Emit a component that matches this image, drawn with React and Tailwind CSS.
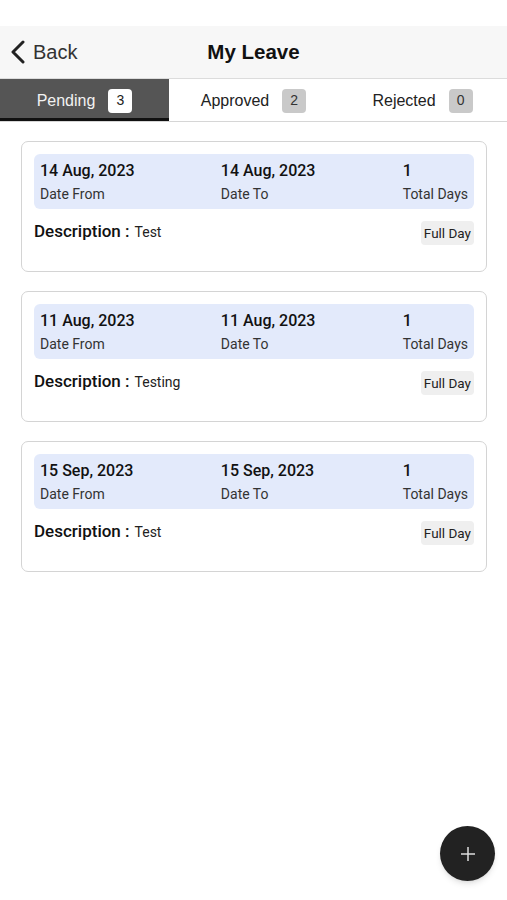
import React from "react";

const leaves = [
  { from: "14 Aug, 2023", to: "14 Aug, 2023", days: "1", desc: "Test" },
  { from: "11 Aug, 2023", to: "11 Aug, 2023", days: "1", desc: "Testing" },
  { from: "15 Sep, 2023", to: "15 Sep, 2023", days: "1", desc: "Test" },
];

function Card({ l }) {
  return (
    <div className="h-[131px] rounded-[7px] border border-[#d4d4d4] bg-white px-[12px] pt-[12px]">
      <div className="flex h-[55px] rounded-[6px] bg-[#e3eafb] px-[6px] pt-[7px] text-[#111]">
        <div className="w-[182px] whitespace-nowrap">
          <div className="text-[16px] font-medium leading-[20px]">{l.from}</div>
          <div className="mt-[4px] text-[14px] leading-[18px] text-[#333]">Date From</div>
        </div>
        <div className="w-[184px] whitespace-nowrap pl-[1px]">
          <div className="text-[16px] font-medium leading-[20px]">{l.to}</div>
          <div className="mt-[4px] text-[14px] leading-[18px] text-[#333]">Date To</div>
        </div>
        <div className="whitespace-nowrap pl-[1px]">
          <div className="text-[16px] font-medium leading-[20px]">{l.days}</div>
          <div className="mt-[4px] text-[14px] leading-[18px] text-[#333]">Total Days</div>
        </div>
      </div>
      <div className="mt-[12px] flex items-start justify-between">
        <div className="flex items-baseline text-[#111]">
          <span className="text-[17px] font-medium leading-[20px]">Description :</span>
          <span className="ml-[5px] text-[14px] leading-[18px] text-[#222]">{l.desc}</span>
        </div>
        <div className="flex h-[24px] items-center rounded-[4px] bg-[#efefef] px-[3px] text-[13.5px] leading-[18px] text-[#222]">
          Full Day
        </div>
      </div>
    </div>
  );
}

function Tab({ label, count, active }) {
  return (
    <div
      className={
        active
          ? "flex w-[169px] items-center justify-center gap-[13px] border-b-[3px] border-[#111] bg-[#555] pt-[4px] text-[16px] text-[#f2f2f2]"
          : "flex w-[169px] items-center justify-center gap-[13px] pt-[1px] text-[16px] text-[#222]"
      }
    >
      <span>{label}</span>
      <span
        className={
          active
            ? "flex h-[24px] w-[24px] items-center justify-center rounded-[4px] bg-white text-[14px] text-[#222]"
            : "flex h-[24px] w-[24px] items-center justify-center rounded-[4px] bg-[#c9c9c9] text-[14px] text-[#333]"
        }
      >
        {count}
      </span>
    </div>
  );
}

export default function App() {
  return (
    <div
      className="relative h-[900px] w-[507px] overflow-hidden bg-white"
      style={{ fontFamily: "Roboto, 'Noto Sans', sans-serif" }}
    >
      <div className="h-[26px] bg-white" />
      <div
        className="relative flex h-[53px] items-center border-b border-[#dcdcdc] bg-[#f7f7f7]"
        style={{ fontFamily: "'Liberation Sans', Arial, sans-serif" }}
      >
        <div className="flex items-center pl-[10px] text-[#222]">
          <svg width="17" height="24" viewBox="0 0 17 24" fill="none">
            <path d="M13 2 L3 12 L13 22" stroke="#222" strokeWidth="3" strokeLinecap="round" strokeLinejoin="round" />
          </svg>
          <span className="ml-[6px] text-[20px] leading-none text-[#333]">Back</span>
        </div>
        <div className="absolute left-0 right-0 text-center text-[20.5px] font-bold text-[#111]">
          My Leave
        </div>
      </div>
      <div
        className="flex h-[43px] border-b border-[#d6d6d6]"
        style={{ fontFamily: "'Liberation Sans', Arial, sans-serif" }}
      >
        <Tab label="Pending" count="3" active />
        <Tab label="Approved" count="2" />
        <Tab label="Rejected" count="0" />
      </div>
      <div className="flex flex-col gap-[19px] px-[21px] pt-[19px] pr-[20px]">
        {leaves.map((l, i) => (
          <Card key={i} l={l} />
        ))}
      </div>
      <div className="absolute left-[440px] top-[826px] flex h-[55px] w-[55px] items-center justify-center rounded-full bg-[#222] shadow-md">
        <svg width="16" height="16" viewBox="0 0 16 16">
          <path d="M8 1 V15 M1 8 H15" stroke="#ddd" strokeWidth="1.5" />
        </svg>
      </div>
    </div>
  );
}
